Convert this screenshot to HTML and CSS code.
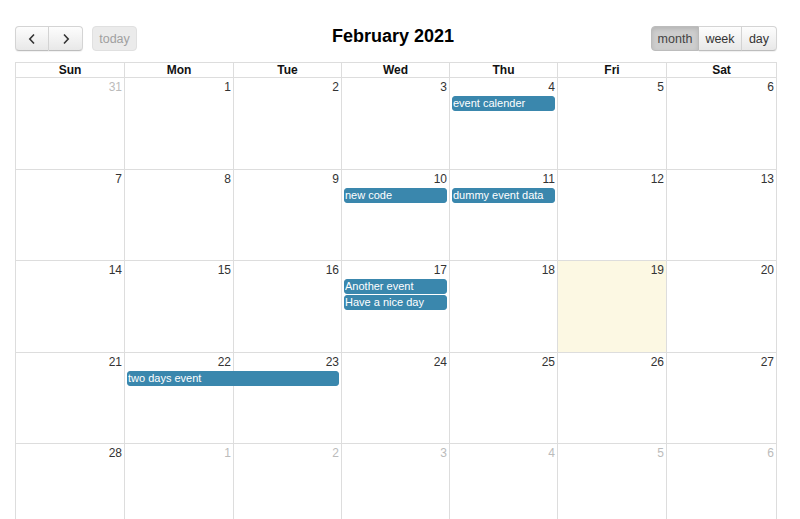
FILE: index.html
```html
<!DOCTYPE html>
<html>
<head>
<meta charset="utf-8">
<link rel="stylesheet" href="styles.css">
</head>
<body>
<div class="cal">
  <div class="toolbar">
    <div class="left">
      <div class="group">
        <button class="btn first"><svg width="10" height="12" viewBox="0 0 10 12"><path d="M7 1.5 L2.8 6 L7 10.5" fill="none" stroke="#333" stroke-width="1.6"/></svg></button>
        <button class="btn last"><svg width="10" height="12" viewBox="0 0 10 12"><path d="M3 1.5 L7.2 6 L3 10.5" fill="none" stroke="#333" stroke-width="1.6"/></svg></button>
      </div>
      <button class="btn single disabled">today</button>
    </div>
    <h2 class="title">February 2021</h2>
    <div class="right">
      <div class="group">
        <button class="btn first active">month</button>
        <button class="btn mid">week</button>
        <button class="btn last">day</button>
      </div>
    </div>
  </div>
  <div class="grid">
    <div class="head">
      <div>Sun</div><div>Mon</div><div>Tue</div><div>Wed</div><div>Thu</div><div>Fri</div><div>Sat</div>
    </div>
    <div class="week">
      <div class="bg c1"></div><div class="bg c2"></div><div class="bg c3"></div><div class="bg c4"></div><div class="bg c5"></div><div class="bg c6"></div><div class="bg c7"></div>
      <div class="num c1 other">31</div><div class="num c2">1</div><div class="num c3">2</div><div class="num c4">3</div><div class="num c5">4</div><div class="num c6">5</div><div class="num c7">6</div>
      <div class="ev c5 r2">event calender</div>
    </div>
    <div class="week">
      <div class="bg c1"></div><div class="bg c2"></div><div class="bg c3"></div><div class="bg c4"></div><div class="bg c5"></div><div class="bg c6"></div><div class="bg c7"></div>
      <div class="num c1">7</div><div class="num c2">8</div><div class="num c3">9</div><div class="num c4">10</div><div class="num c5">11</div><div class="num c6">12</div><div class="num c7">13</div>
      <div class="ev c4 r2">new code</div>
      <div class="ev c5 r2">dummy event data</div>
    </div>
    <div class="week">
      <div class="bg c1"></div><div class="bg c2"></div><div class="bg c3"></div><div class="bg c4"></div><div class="bg c5"></div><div class="bg c6 today"></div><div class="bg c7"></div>
      <div class="num c1">14</div><div class="num c2">15</div><div class="num c3">16</div><div class="num c4">17</div><div class="num c5">18</div><div class="num c6">19</div><div class="num c7">20</div>
      <div class="ev c4 r2">Another event</div>
      <div class="ev c4 r3">Have a nice day</div>
    </div>
    <div class="week">
      <div class="bg c1"></div><div class="bg c2"></div><div class="bg c3"></div><div class="bg c4"></div><div class="bg c5"></div><div class="bg c6"></div><div class="bg c7"></div>
      <div class="num c1">21</div><div class="num c2">22</div><div class="num c3">23</div><div class="num c4">24</div><div class="num c5">25</div><div class="num c6">26</div><div class="num c7">27</div>
      <div class="ev c2 span2 r2">two days event</div>
    </div>
    <div class="week">
      <div class="bg c1"></div><div class="bg c2"></div><div class="bg c3"></div><div class="bg c4"></div><div class="bg c5"></div><div class="bg c6"></div><div class="bg c7"></div>
      <div class="num c1">28</div><div class="num c2 other">1</div><div class="num c3 other">2</div><div class="num c4 other">3</div><div class="num c5 other">4</div><div class="num c6 other">5</div><div class="num c7 other">6</div>
    </div>
  </div>
</div>
</body>
</html>
```
FILE: styles.css
```css
html, body { margin: 0; padding: 0; background: #fff; }
body { font-family: "Liberation Sans", Arial, sans-serif; font-size: 12px; color: #333; }
.cal { padding: 26px 24px 0 15px; width: 762px; }
.toolbar { display: flex; align-items: center; justify-content: space-between; height: 25px; margin-bottom: 11px; }
.left, .right { display: flex; align-items: center; gap: 9px; }
.left { width: 200px; }
.right { width: 200px; justify-content: flex-end; }
.title { margin: 0; font-size: 18px; font-weight: bold; color: #000; position: relative; left: -3px; top: -2px; }
.group { display: flex; }
.btn {
  height: 25px; padding: 0 8px; margin: 0;
  font-family: "Liberation Sans", Arial, sans-serif; font-size: 12.5px; color: #333;
  background: linear-gradient(#fdfdfd, #e8e8e8);
  border: 1px solid #d4d4d4; border-bottom-color: #bdbdbd;
  box-shadow: inset 0 1px 0 rgba(255,255,255,.3), 0 1px 1px rgba(0,0,0,.06);
  border-radius: 0; display: flex; align-items: center; justify-content: center;
}
.btn.first { border-radius: 4px 0 0 4px; }
.btn.last { border-radius: 0 4px 4px 0; border-left: none; }
.btn.mid { border-left: none; }
.btn.single { border-radius: 4px; }
.left .btn.first, .left .btn.last { width: 34px; }
.btn.disabled { color: #a0a0a0; background: #ebebeb; border-color: #e0e0e0; box-shadow: none; width: 45px; padding: 0; }
.btn.active { background: #cdcdcd; border-color: #bcbcbc; color: #444; box-shadow: inset 0 2px 4px rgba(0,0,0,.12); width: 48px; padding: 0; }
.right .btn.mid { width: 43px; padding: 0; }
.right .btn.last { width: 35px; padding: 0; }
.grid { border-left: 1px solid #ddd; border-top: 1px solid #ddd; width: 761px; }
.head, .week { display: grid; grid-template-columns: 109px 109px 108px 108px 108px 109px 110px; }
.head div { border-right: 1px solid #ddd; border-bottom: 1px solid #ddd; text-align: center; font-weight: bold; font-size: 12px; color: #111; height: 14px; line-height: 14px; }
.week { grid-template-rows: auto auto auto 1fr; height: 91.5px; }
.bg { grid-row: 1 / -1; border-right: 1px solid #ddd; border-bottom: 1px solid #ddd; }
.bg.today { background: #fcf8e3; }
.c1 { grid-column: 1; } .c2 { grid-column: 2; } .c3 { grid-column: 3; } .c4 { grid-column: 4; }
.c5 { grid-column: 5; } .c6 { grid-column: 6; } .c7 { grid-column: 7; }
.span2 { grid-column: 2 / span 2; }
.num { grid-row: 1; text-align: right; padding: 2px 3px 1px 0; font-size: 12px; line-height: 14px; color: #333; }
.num.other { color: #bbb; }
.r2 { grid-row: 2; } .r3 { grid-row: 3; }
.ev {
  margin: 1px 3px 0 2px; background: #3a87ad; border: 1px solid #3a87ad; border-radius: 3px;
  color: #fff; font-size: 11px; line-height: 13px; padding: 0; white-space: nowrap; overflow: hidden;
}
```
